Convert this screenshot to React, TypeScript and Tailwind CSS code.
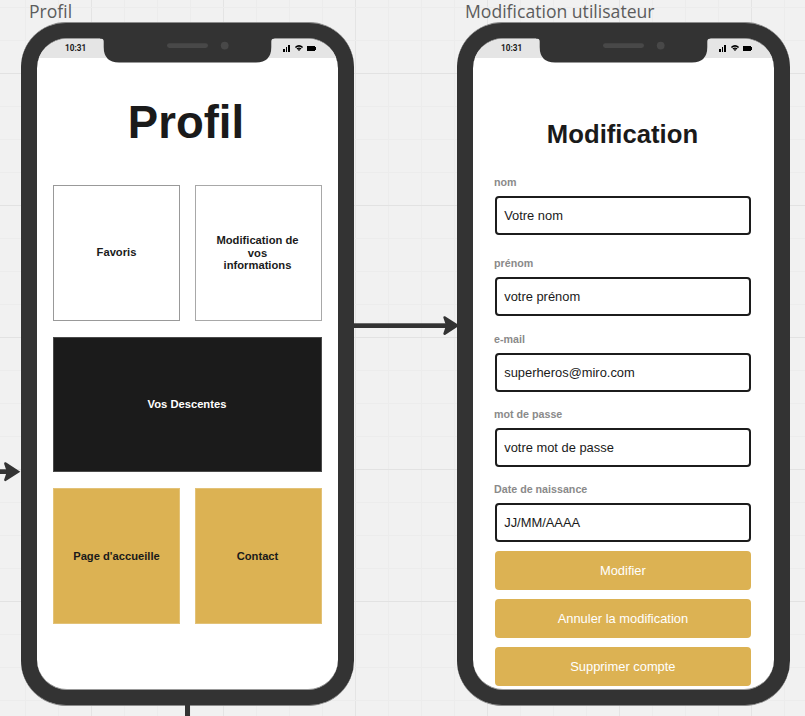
import type { ReactNode } from "react";

const minorV = [25, 58, 91, 124, 157, 190, 223, 256, 289, 322, 355, 388, 421, 454, 487, 520, 553, 586, 619, 652, 685, 718, 751, 784];
const minorH = [7, 40, 73, 106, 139, 172, 205, 238, 271, 304, 337, 370, 403, 436, 469, 502, 535, 568, 601, 634, 667, 700];

function BoardGrid() {
  return (
    <svg className="absolute inset-0" width="805" height="716" shapeRendering="crispEdges">
      {minorV.map((x, i) => (
        <rect key={x} x={x} y="0" width="1" height="716" fill={i % 4 === 2 ? "#e4e4e4" : "#ececec"} />
      ))}
      {minorH.map((y, i) => (
        <rect key={y} x="0" y={y} width="805" height="1" fill={i % 4 === 2 ? "#e2e2e2" : "#ececec"} />
      ))}
    </svg>
  );
}

function Connectors() {
  return (
    <svg className="absolute inset-0" width="805" height="716" fill="#333333">
      <rect x="353" y="323.3" width="96" height="4.7" />
      <path d="M459.5 325.6 L445 316.2 Q443.3 315.8 443.3 317.6 L446 325.6 L443.3 333.6 Q443.3 335.4 445 335 Z" />
      <rect x="0" y="469.3" width="10" height="4.7" />
      <path d="M20.3 471.7 L5.8 462.3 Q4.1 461.9 4.1 463.7 L6.8 471.7 L4.1 479.7 Q4.1 481.5 5.8 481.1 Z" />
      <rect x="185" y="705" width="5" height="11" />
    </svg>
  );
}

function StatusIcons() {
  return (
    <svg className="block" width="34" height="8" viewBox="0 0 34 8">
      <g shapeRendering="crispEdges">
        <rect x="0" y="5" width="2" height="3" />
        <rect x="3" y="3" width="1" height="5" />
        <rect x="5" y="1" width="2" height="7" />
        <rect x="24" y="2" width="8" height="5" />
        <rect x="32" y="3" width="1" height="3" />
      </g>
      <path d="M12.4 3.5 Q16 0.1 19.6 3.5" fill="none" stroke="#000" strokeWidth="1.7" />
      <path d="M13.9 5 Q16 3.2 18.1 5" fill="none" stroke="#000" strokeWidth="1.3" />
      <path d="M14.6 5.2 L17.4 5.2 L16 7.2 Z" />
    </svg>
  );
}

function Notch() {
  return (
    <svg className="block" width="175" height="25" viewBox="0 0 175 25">
      <path d="M0 0 V0.5 H0.7 Q3.7 0.5 3.7 3.5 V9 Q3.7 24.4 19 24.4 H156 Q171.3 24.4 171.3 9 V3.5 Q171.3 0.5 174.3 0.5 V0 Z" fill="#333333" />
      <rect x="67" y="5.2" width="41" height="4.8" rx="2.4" fill="#484848" />
      <circle cx="124.7" cy="7.6" r="3.9" fill="#484848" />
    </svg>
  );
}

function Phone({ label, children }: { label: string; children: ReactNode }) {
  return (
    <section className="w-[333px] shrink-0">
      <h2 className="h-[22px] whitespace-nowrap pl-[8px] font-['Open_Sans',sans-serif] text-[17.6px] leading-[22px] text-[#5c5c5c]">{label}</h2>
      <div className="relative h-[684px] rounded-[45px] border-y border-[#8c8c8c] bg-[#333333] px-4 py-[15px]">
        <div className="h-[652px] w-[301px] overflow-hidden rounded-[30px] border-y border-[#999999] bg-white">
          <header className="flex h-[19px] items-center justify-between bg-[#e5e5e5] pb-[2px] pl-7 pr-[21px]">
            <span className="font-[Roboto,sans-serif] text-[8.2px] font-bold leading-[16px]">10:31</span>
            <StatusIcons />
          </header>
          {children}
        </div>
        <div className="absolute left-[79px] top-[15px]">
          <Notch />
        </div>
      </div>
    </section>
  );
}

const tile = "flex items-center justify-center text-center text-[11.2px] font-bold leading-[12.5px] border";

function ProfilScreen() {
  return (
    <main className="px-4">
      <h1 className="mt-[38px] -ml-[3px] h-[53px] text-center text-[45.5px] font-bold leading-[53px]">Profil</h1>
      <div className="mt-[36px] grid grid-cols-[127px_127px] grid-rows-[136px_135px_136px] gap-x-[15px] gap-y-4">
        <div className={`${tile} border-[#999999] pb-[2px]`}>Favoris</div>
        <div className={`${tile} border-[#a8a8a8] pr-[2px]`}>
          <span>Modification de<br />vos<br />informations</span>
        </div>
        <div className={`${tile} col-span-2 border-[#4a4a4a] bg-[#1b1b1b] pr-[1px] text-white`}>Vos Descentes</div>
        <div className={`${tile} border-[#e3c277] bg-[#dcb253]`}>Page d'accueille</div>
        <div className={`${tile} border-[#e3c277] bg-[#dcb253] pr-[2px]`}>Contact</div>
      </div>
    </main>
  );
}

function Field({ label, value, className }: { label: string; value: string; className: string }) {
  return (
    <div className={className}>
      <div className="h-3 text-[10.7px] font-bold leading-3 text-[#8a8a8a]">{label}</div>
      <div className="ml-[0.6px] mt-2 flex h-[39px] w-[256.6px] items-center rounded-[4px] border-2 border-[#1c1c1c] pb-[0.5px] pl-[7.6px] text-[12.9px]">{value}</div>
    </div>
  );
}

const button = "flex h-[38.6px] items-center justify-center rounded-[4px] bg-[#dcb253]";

function ModificationScreen() {
  return (
    <main className="pl-[21px]">
      <h1 className="mt-[61px] h-[30px] w-[257px] text-center text-[25.7px] font-bold leading-[30px]">Modification</h1>
      <div className="w-[258px]">
        <Field label="nom" value="Votre nom" className="mt-[27px]" />
        <Field label="prénom" value="votre prénom" className="mt-[22px]" />
        <Field label="e-mail" value="superheros@miro.com" className="mt-[17px]" />
        <Field label="mot de passe" value="votre mot de passe" className="mt-4" />
        <Field label="Date de naissance" value="JJ/MM/AAAA" className="mt-4" />
        <div className="ml-[0.6px] mt-[9px] flex w-[256.6px] flex-col gap-[9.4px] text-[12.9px] text-white">
          <div className={button}>Modifier</div>
          <div className={button}>Annuler la modification</div>
          <div className={button}>Supprimer compte</div>
        </div>
      </div>
    </main>
  );
}

export default function App() {
  return (
    <div className="relative h-[716px] w-[805px] overflow-hidden bg-[#f1f1f1] font-['Liberation_Sans',Arial,sans-serif] text-[#1a1a1a]">
      <BoardGrid />
      <div className="relative flex gap-[103px] pl-[21px]">
        <Phone label="Profil">
          <ProfilScreen />
        </Phone>
        <Phone label="Modification utilisateur">
          <ModificationScreen />
        </Phone>
      </div>
      <Connectors />
    </div>
  );
}
